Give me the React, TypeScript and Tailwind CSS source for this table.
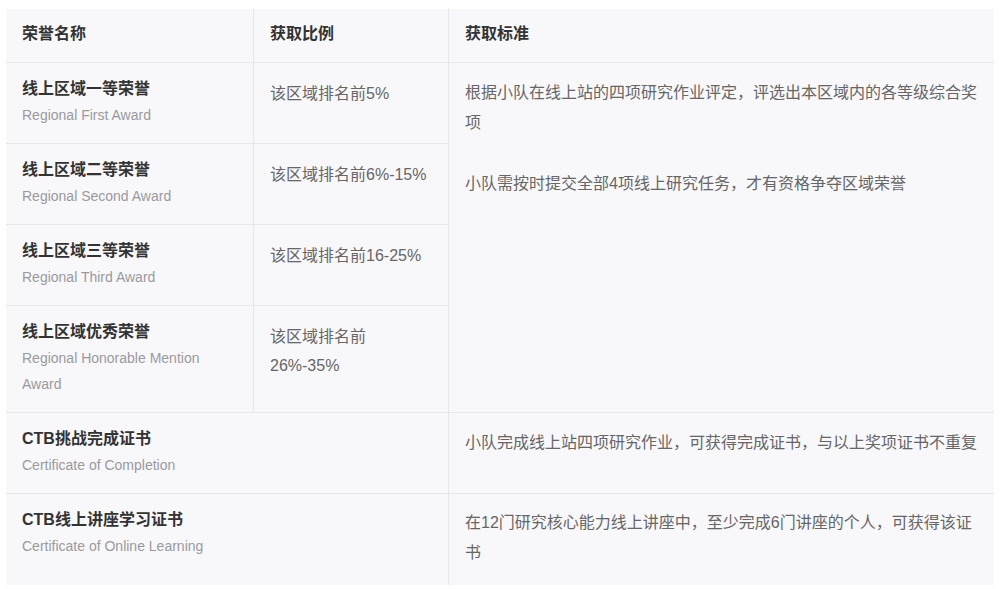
const font = "font-['Liberation_Sans','Noto_Sans_CJK_SC',sans-serif]";

type Honor = {
  title: string;
  en: string[];
  ratio?: string[];
};

const regional: Honor[] = [
  { title: "线上区域一等荣誉", en: ["Regional First Award"], ratio: ["该区域排名前5%"] },
  { title: "线上区域二等荣誉", en: ["Regional Second Award"], ratio: ["该区域排名前6%-15%"] },
  { title: "线上区域三等荣誉", en: ["Regional Third Award"], ratio: ["该区域排名前16-25%"] },
  {
    title: "线上区域优秀荣誉",
    en: ["Regional Honorable Mention", "Award"],
    ratio: ["该区域排名前", "26%-35%"],
  },
];

function NameCell({ item }: { item: Honor }) {
  return (
    <div className="pl-4 pr-3 pt-[13px] border-b border-r border-[#e6e6eb]">
      <div className="text-[16px] leading-[26px] font-bold text-[#333]">{item.title}</div>
      {item.en.map((line) => (
        <div key={line} className="text-[14px] leading-[26px] text-[#9a9a9e]">
          {line}
        </div>
      ))}
    </div>
  );
}

export default function App() {
  return (
    <div className={`w-[1002px] h-[589px] bg-white pt-[9px] pl-[6px] ${font}`}>
      <div className="w-[988px] h-[576px] bg-[#f8f8fb] grid grid-cols-[248px_195px_1fr] grid-rows-[54px_81px_81px_81px_107px_81px_91px]">
        {/* header */}
        {["荣誉名称", "获取比例", "获取标准"].map((h, i) => (
          <div
            key={h}
            className={`pl-4 pt-[12px] text-[16px] leading-[26px] font-bold text-[#333] border-b border-[#e6e6eb] ${
              i < 2 ? "border-r" : ""
            }`}
          >
            {h}
          </div>
        ))}

        {regional.map((item, idx) => (
          <div key={item.title} className="contents">
            <NameCell item={item} />
            <div className="pl-4 pt-[16px] border-b border-r border-[#e6e6eb] text-[16px] leading-[29px] text-[#666]">
              {item.ratio?.map((r) => (
                <div key={r}>{r}</div>
              ))}
            </div>
            {idx === 0 ? (
              <div className="row-span-4 pl-4 pr-3 pt-[15px] border-b border-[#e6e6eb] text-[16px] leading-[30px] text-[#666]">
                <p className="mb-[31px]">
                  根据小队在线上站的四项研究作业评定，评选出本区域内的各等级综合奖项
                </p>
                <p>小队需按时提交全部4项线上研究任务，才有资格争夺区域荣誉</p>
              </div>
            ) : null}
          </div>
        ))}

        <div className="col-span-2 grid grid-cols-1">
          <NameCell item={{ title: "CTB挑战完成证书", en: ["Certificate of Completion"] }} />
        </div>
        <div className="pl-4 pr-3 pt-[15px] border-b border-[#e6e6eb] text-[16px] leading-[30px] text-[#666]">
          小队完成线上站四项研究作业，可获得完成证书，与以上奖项证书不重复
        </div>

        <div className="col-span-2 grid grid-cols-1 [&>div]:border-b-0">
          <NameCell item={{ title: "CTB线上讲座学习证书", en: ["Certificate of Online Learning"] }} />
        </div>
        <div className="pl-4 pr-3 pt-[14px] text-[16px] leading-[30px] text-[#666]">
          在12门研究核心能力线上讲座中，至少完成6门讲座的个人，可获得该证书
        </div>
      </div>
    </div>
  );
}
